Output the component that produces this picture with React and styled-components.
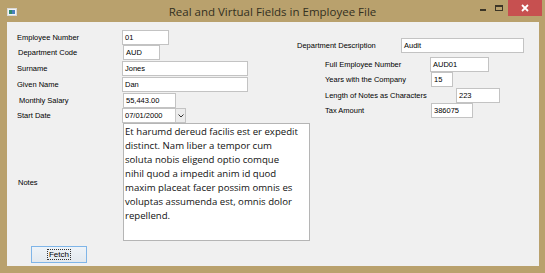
import styled, { createGlobalStyle } from 'styled-components'

const GlobalStyle = createGlobalStyle`
   html, body {
      margin: 0;
      padding: 0;
      background: #b9a16d;
   }
   * {
      box-sizing: border-box;
   }
`

const notesLines = [
   'Et harumd dereud facilis est er expedit',
   'distinct. Nam liber a tempor cum',
   'soluta nobis eligend optio comque',
   'nihil quod a impedit anim id quod',
   'maxim placeat facer possim omnis es',
   'voluptas assumenda est, omnis dolor',
   'repellend.',
]

const leftFields = [
   { label: 'Employee Number', value: '01', width: 47, pad: 0, nudge: 0, top: 0 },
   { label: 'Department Code', value: 'AUD', width: 37, pad: 1, nudge: 1, top: 0 },
   { label: 'Surname', value: 'Jones', width: 126, pad: 0, nudge: 0, top: 1 },
   { label: 'Given Name', value: 'Dan', width: 126, pad: 0, nudge: 0, top: 1 },
   { label: 'Monthly Salary', value: '55,443.00', width: 53, pad: 2, nudge: 1, top: 1 },
]

const derivedFields = [
   { label: 'Full Employee Number', value: 'AUD01', width: 59, labelWidth: 105, top: 4 },
   { label: 'Years with the Company', value: '15', width: 22, labelWidth: 106, top: 0 },
   { label: 'Length of Notes as Characters', value: '223', width: 44, labelWidth: 131, top: 1 },
   { label: 'Tax Amount', value: '386075', width: 42, labelWidth: 106, top: 0 },
]

export default function App() {
   return (
      <>
         <GlobalStyle />
         <Window>
            <TitleBar>
               <TitleLeft>
                  <svg width="10" height="8" viewBox="0 0 10 8">
                     <rect x="0.5" y="0.5" width="9" height="7" fill="#f4f4f4" stroke="#d8d8d8" />
                     <rect x="2" y="2" width="3" height="4" fill="#2f8a6e" />
                     <rect x="5" y="2" width="3" height="4" fill="#4a7fc0" />
                  </svg>
               </TitleLeft>
               <Title>Real and Virtual Fields in Employee File</Title>
               <Controls>
                  <MinButton />
                  <MaxButton />
                  <CloseButton>
                     <svg width="8" height="8" viewBox="0 0 8 8">
                        <path d="M1 1 L7 7 M7 1 L1 7" stroke="#fff" strokeWidth="1.8" />
                     </svg>
                  </CloseButton>
               </Controls>
            </TitleBar>
            <Client>
               <LeftColumn>
                  {leftFields.map((f) => (
                     <Row key={f.label} $top={f.top}>
                        <Label $pad={f.pad}>{f.label}</Label>
                        <TextBox $width={f.width} $nudge={f.nudge}>
                           {f.value}
                        </TextBox>
                     </Row>
                  ))}
                  <Row $top={0}>
                     <Label>Start Date</Label>
                     <DatePicker>
                        <DateText>07/01/2000</DateText>
                        <DropButton>
                           <svg width="6" height="4" viewBox="0 0 6 4">
                              <path d="M0.5 0.5 L3 3 L5.5 0.5" stroke="#333" strokeWidth="1" fill="none" />
                           </svg>
                        </DropButton>
                     </DatePicker>
                  </Row>
                  <Row $top={0}>
                     <Label $pad={1}>Notes</Label>
                     <NotesBox>{notesLines.join('\n')}</NotesBox>
                  </Row>
                  <FetchButton>
                     <FocusRect>Fetch</FocusRect>
                  </FetchButton>
               </LeftColumn>
               <RightColumn>
                  <Row $top={0}>
                     <Label $w={104}>Department Description</Label>
                     <TextBox $width={123}>Audit</TextBox>
                  </Row>
                  <Derived>
                     {derivedFields.map((f) => (
                        <Row key={f.label} $top={f.top}>
                           <Label $w={f.labelWidth}>{f.label}</Label>
                           <TextBox $width={f.width}>{f.value}</TextBox>
                        </Row>
                     ))}
                  </Derived>
               </RightColumn>
            </Client>
         </Window>
      </>
   )
}

const Window = styled.div`
   width: 545px;
   height: 273px;
   background: #b9a16d;
   display: flex;
   flex-direction: column;
`
const TitleBar = styled.div`
   height: 22px;
   display: grid;
   grid-template-columns: 1fr auto 1fr;
   align-items: center;
`
const TitleLeft = styled.div`
   display: flex;
   align-items: center;
   padding-left: 7px;
   padding-top: 1px;
`
const Title = styled.div`
   font-family: 'Open Sans', 'Noto Sans', sans-serif;
   font-size: 11.5px;
   color: #33301f;
   white-space: nowrap;
   padding-top: 1px;
`
const Controls = styled.div`
   display: flex;
   justify-content: flex-end;
   align-self: start;
   padding-right: 3px;
`
const MinButton = styled.div`
   width: 6px;
   height: 2px;
   background: #3b3526;
   margin-top: 9px;
   margin-right: 9px;
`
const MaxButton = styled.div`
   width: 8px;
   height: 6px;
   border: 1px solid #3b3526;
   border-top-width: 2px;
   margin-top: 5px;
   margin-right: 5px;
`
const CloseButton = styled.div`
   width: 34px;
   height: 16px;
   background: #c75050;
   display: flex;
   align-items: center;
   justify-content: center;
`
const Client = styled.div`
   flex: 1;
   margin: 0 6px 7px 7px;
   background: #f0f0f0;
   display: flex;
`
const LeftColumn = styled.div`
   width: 283px;
   flex-shrink: 0;
   padding: 8px 0 0 10px;
   display: flex;
   flex-direction: column;
`
const RightColumn = styled.div`
   flex: 1;
   padding: 16px 0 0 7px;
   display: flex;
   flex-direction: column;
`
const Derived = styled.div`
   padding-left: 28px;
   display: flex;
   flex-direction: column;
`
const Row = styled.div`
   display: flex;
   align-items: center;
   margin-top: ${({ $top }) => $top}px;
`
const Label = styled.div`
   width: ${({ $w }) => $w ?? 105}px;
   flex-shrink: 0;
   padding-left: ${({ $pad }) => $pad ?? 0}px;
   font-family: 'Liberation Sans', Arial, sans-serif;
   font-size: 7.5px;
   color: #000;
   white-space: nowrap;
`
const TextBox = styled.div`
   width: ${({ $width }) => $width}px;
   flex-shrink: 0;
   height: 15px;
   margin-left: ${({ $nudge }) => $nudge ?? 0}px;
   background: #fff;
   border: 1px solid #c3c3c3;
   padding-left: 2px;
   display: flex;
   align-items: center;
   font-family: 'Liberation Sans', Arial, sans-serif;
   font-size: 7.5px;
   color: #000;
   white-space: nowrap;
`
const DatePicker = styled.div`
   width: 64px;
   flex-shrink: 0;
   height: 15px;
   display: flex;
   background: #fff;
   border: 1px solid #c3c3c3;
`
const DateText = styled.div`
   flex: 1;
   padding-left: 2px;
   display: flex;
   align-items: center;
   font-family: 'Liberation Sans', Arial, sans-serif;
   font-size: 7.5px;
   color: #000;
`
const DropButton = styled.div`
   width: 10px;
   background: #ececec;
   border-left: 1px solid #c9c9c9;
   display: flex;
   align-items: center;
   justify-content: center;
`
const NotesBox = styled.div`
   width: 187px;
   flex-shrink: 0;
   height: 118px;
   margin-left: 1px;
   background: #fff;
   border: 1px solid #b5b5b5;
   padding: 1px 0 0 1px;
   font-family: 'Open Sans', 'Noto Sans', sans-serif;
   font-size: 9.6px;
   line-height: 14px;
   color: #111;
   white-space: pre;
   overflow: hidden;
`
const FetchButton = styled.div`
   width: 56px;
   height: 17px;
   margin: 5px 0 0 14px;
   border: 1px solid #7fb5e8;
   background: linear-gradient(#eef3f8, #e3e9ef);
   display: flex;
   align-items: center;
   justify-content: center;
`
const FocusRect = styled.span`
   border: 1px dotted #333;
   padding: 0 1px;
   font-family: 'Liberation Sans', Arial, sans-serif;
   font-size: 8px;
   line-height: 9px;
   color: #000;
`
